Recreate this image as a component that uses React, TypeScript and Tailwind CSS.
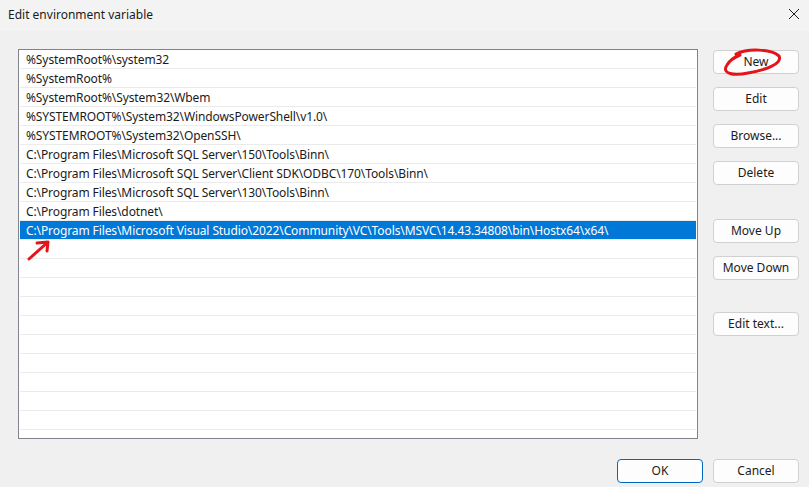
import React from "react"

const rows = [
  "%SystemRoot%\\system32",
  "%SystemRoot%",
  "%SystemRoot%\\System32\\Wbem",
  "%SYSTEMROOT%\\System32\\WindowsPowerShell\\v1.0\\",
  "%SYSTEMROOT%\\System32\\OpenSSH\\",
  "C:\\Program Files\\Microsoft SQL Server\\150\\Tools\\Binn\\",
  "C:\\Program Files\\Microsoft SQL Server\\Client SDK\\ODBC\\170\\Tools\\Binn\\",
  "C:\\Program Files\\Microsoft SQL Server\\130\\Tools\\Binn\\",
  "C:\\Program Files\\dotnet\\",
  "C:\\Program Files\\Microsoft Visual Studio\\2022\\Community\\VC\\Tools\\MSVC\\14.43.34808\\bin\\Hostx64\\x64\\",
]

const selected = 9

function Btn({ label, primary }: { label: string; primary?: boolean }) {
  return (
    <button
      className={
        "w-[86px] h-[24px] rounded-[4px] bg-[#fdfdfd] text-[12px] text-[#1b1b1b] flex items-center justify-center leading-none border " +
        (primary ? "border-[#0067c0]" : "border-[#d0d0d0]")
      }
    >
      {label}
    </button>
  )
}

export default function App() {
  const all = [...rows, ...Array(20 - rows.length).fill("")]

  return (
    <div
      className="relative w-[809px] h-[487px] bg-[#f0f0f0] flex flex-col overflow-hidden"
      style={{ fontFamily: '"Noto Sans", "Liberation Sans", Arial, sans-serif' }}
    >
      {/* title bar */}
      <div className="h-[31px] bg-[#f3f3f3] flex items-center justify-between pl-[8px] pr-[8px]">
        <span className="text-[12px] text-[#1b1b1b] leading-none -mt-[2px]">Edit environment variable</span>
        <svg width="12" height="12" viewBox="0 0 12 12" className="mr-[1px] -mt-[3px]">
          <path d="M1 1 L11 11 M11 1 L1 11" stroke="#1b1b1b" strokeWidth="1" />
        </svg>
      </div>

      <div className="flex-1 flex flex-col pl-[18px] pr-[10px] pt-[18px]">
        <div className="flex gap-[15px]">
          {/* list box */}
          <div className="w-[680px] h-[390px] bg-white border border-[#80838c] px-[1px]">
            {all.map((t, i) => (
              <div
                key={i}
                className={
                  "h-[19px] border-b border-[#ebebeb] pl-[6px] pt-[1px] flex items-center text-[12px] tracking-[-0.1px] whitespace-nowrap " +
                  (i === selected ? "bg-[#0078d7] text-white" : "text-[#1b1b1b]")
                }
              >
                {t}
              </div>
            ))}
          </div>

          {/* buttons */}
          <div className="flex flex-col pt-[1px]">
            <div className="flex flex-col gap-[13px]">
              <Btn label="New" />
              <Btn label="Edit" />
              <Btn label="Browse..." />
              <Btn label="Delete" />
            </div>
            <div className="flex flex-col gap-[13px] mt-[34px]">
              <Btn label="Move Up" />
              <Btn label="Move Down" />
            </div>
            <div className="mt-[32px]">
              <Btn label="Edit text..." />
            </div>
          </div>
        </div>

        <div className="flex justify-end gap-[10px] mt-[20px]">
          <Btn label="OK" primary />
          <Btn label="Cancel" />
        </div>
      </div>

      {/* red annotations */}
      <svg className="absolute inset-0 pointer-events-none" width="809" height="487">
        <path
          d="M736 54 C748 48, 771 49, 779 56 C783 64, 765 70, 748 73 C734 76, 721 74, 727 65 C730 60, 735 57, 740 55"
          fill="none"
          stroke="#e3151a"
          strokeWidth="3"
          strokeLinecap="round"
        />
        <path
          d="M29 259 L48 242 M37 243 L48 242 L47 251"
          fill="none"
          stroke="#e3151a"
          strokeWidth="3"
          strokeLinecap="round"
          strokeLinejoin="round"
        />
      </svg>
    </div>
  )
}
